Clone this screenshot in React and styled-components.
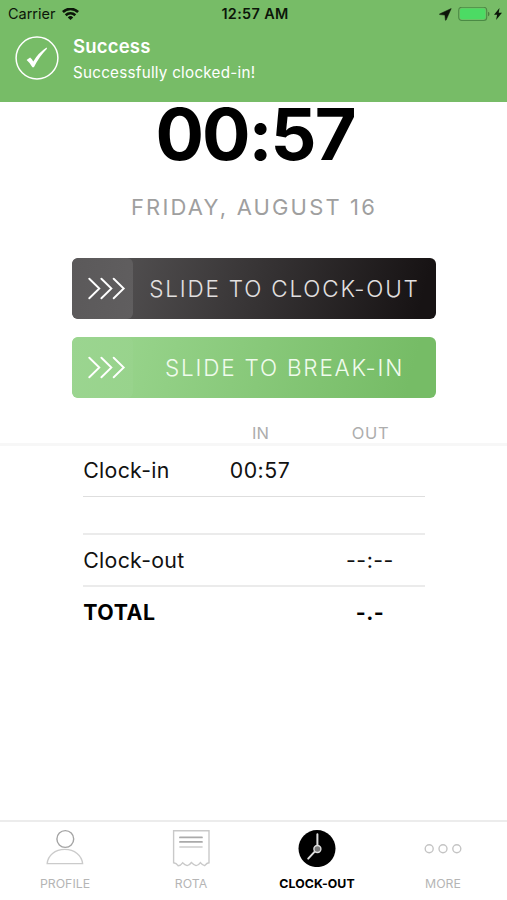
import React from "react";
import styled, { createGlobalStyle } from "styled-components";

const GlobalStyle = createGlobalStyle`
  *, *::before, *::after { box-sizing: border-box; }
  body {
    margin: 0;
    background: #fff;
    font-family: Inter, "Liberation Sans", sans-serif;
    font-feature-settings: "calt" 0;
  }
  svg { display: block; flex: none; }
`;

const Screen = styled.div`
  width: 507px;
  height: 900px;
  display: flex;
  flex-direction: column;
  background: #fff;
  color: #000;
  overflow: hidden;
`;

const Banner = styled.header`
  height: 102px;
  flex: none;
  background: #77bc67;
`;

const StatusBar = styled.div`
  height: 28px;
  padding: 0 5px 0 8px;
  display: grid;
  grid-template-columns: 1fr auto 1fr;
  align-items: center;
  color: #0c1609;
`;

const StatusGroup = styled.div`
  display: flex;
  align-items: center;
  justify-content: ${(p) => (p.$end ? "flex-end" : "flex-start")};
  gap: ${(p) => p.$gap}px;
`;

const Carrier = styled.span`
  font-size: 14.5px;
  line-height: 28px;
  letter-spacing: -0.02px;
`;

const StatusTime = styled.span`
  font-size: 14.4px;
  line-height: 28px;
  font-weight: 600;
  letter-spacing: 0.35px;
`;

const Notice = styled.div`
  display: flex;
  align-items: flex-start;
  padding: 8px 0 0 15px;
  gap: 14px;
  color: #fff;
`;

const NoticeText = styled.div`
  display: flex;
  flex-direction: column;
  margin-top: -1px;
`;

const NoticeTitle = styled.strong`
  font-size: 18.5px;
  line-height: 22px;
  font-weight: 600;
  letter-spacing: 0.2px;
`;

const NoticeBody = styled.span`
  margin-top: 5px;
  font-size: 15.2px;
  line-height: 22px;
  letter-spacing: 0.26px;
`;

const Main = styled.main`
  flex: 1;
  display: flex;
  flex-direction: column;
  align-items: center;
`;

const Clock = styled.div`
  height: 64px;
  line-height: 64px;
  font-size: 72px;
  font-weight: 700;
  letter-spacing: -2px;
  padding-left: 3px;
`;

const DateLine = styled.div`
  margin-top: 24px;
  height: 33px;
  line-height: 34px;
  font-size: 22px;
  font-weight: 400;
  letter-spacing: 2.15px;
  padding-left: 1px;
  color: #9f9f9f;
  white-space: nowrap;
`;

const Sliders = styled.div`
  width: 364px;
  margin: 35px 0 0 1px;
  display: flex;
  flex-direction: column;
  gap: 18.4px;
`;

const Slider = styled.div`
  height: 61px;
  display: flex;
  border-radius: 6px;
  overflow: hidden;
  color: ${(p) => p.$color};
  background: ${(p) => p.$fill};
`;

const SliderHandle = styled.div`
  width: 61px;
  border-radius: 6px;
  display: flex;
  align-items: center;
  padding-left: 15.5px;
  color: #fff;
  background: ${(p) => p.$fill};
`;

const SliderLabel = styled.span`
  flex: 1;
  text-align: center;
  font-size: 22.5px;
  line-height: 62px;
  font-weight: 300;
  letter-spacing: 1.8px;
  white-space: nowrap;
`;

const ColumnHeads = styled.div`
  width: 342px;
  margin-top: 23.6px;
  height: 21px;
  display: grid;
  grid-template-columns: 122px 110px 110px;
  font-size: 16.5px;
  line-height: 23px;
  color: #adadad;
  text-align: center;
`;

const Head = styled.span`
  grid-column: ${(p) => p.$column};
  letter-spacing: ${(p) => p.$spacing}px;
  padding-left: 2px;
`;

const Sheet = styled.section`
  width: 100%;
  border-top: 3px solid #f7f7f7;
  display: flex;
  flex-direction: column;
  align-items: center;
`;

const Row = styled.div`
  width: 342px;
  height: ${(p) => p.$height}px;
  display: grid;
  grid-template-columns: 122px 110px 110px;
  align-items: center;
  padding-bottom: ${(p) => p.$lift || 0}px;
  border-bottom: ${(p) => p.$line || 0}px solid ${(p) => (p.$line === 2 ? "#ebebeb" : "#dedede")};
  font-size: 21.3px;
  line-height: 26px;
  color: ${(p) => (p.$bold ? "#000" : "#111")};
  font-weight: ${(p) => (p.$bold ? 700 : 400)};
`;

const RowLabel = styled.span`
  padding-left: 0.7px;
  letter-spacing: ${(p) => p.$spacing || 0.32}px;
  white-space: nowrap;
`;

const Value = styled.span`
  grid-column: ${(p) => p.$column};
  text-align: center;
  letter-spacing: 0.5px;
  padding-left: 1px;
`;

const TabBar = styled.nav`
  height: 80px;
  flex: none;
  border-top: 2px solid #ececec;
  display: grid;
  grid-template-columns: repeat(4, 126px);
  padding-left: 2px;
`;

const Tab = styled.div`
  display: flex;
  flex-direction: column;
  align-items: center;
  padding-top: 7px;
`;

const TabLabel = styled.span`
  margin-top: 8px;
  font-size: 12.3px;
  line-height: 18px;
  font-weight: ${(p) => (p.$active ? 700 : 400)};
  letter-spacing: ${(p) => (p.$active ? 0.1 : 0)}px;
  color: ${(p) => (p.$active ? "#000" : "#b5b5b5")};
`;

const WifiIcon = () => (
  <svg width="17" height="13" viewBox="0 0 17 13" fill="none" stroke="currentColor" strokeWidth="2.6">
    <path d="M0.9 4a10.9 10.9 0 0 1 15.2 0" />
    <path d="M3.7 7.2a6.9 6.9 0 0 1 9.6 0" />
    <path d="M8.5 12.1 5.8 9.4a3.9 3.9 0 0 1 5.4 0Z" fill="currentColor" stroke="none" />
  </svg>
);

const LocationIcon = () => (
  <svg width="13" height="13" viewBox="0 0 13 13" fill="currentColor" stroke="currentColor" strokeWidth="0.5">
    <path d="M12.2 0.6 0.6 5.9q-0.3 0.5 0.3 0.7l5 0.5 0.5 5q0.3 0.5 0.7 0Z" />
  </svg>
);

const BatteryIcon = () => (
  <svg width="32" height="15" viewBox="0 0 32 15" fill="none">
    <rect x="0.7" y="0.3" width="28" height="13.2" rx="3" stroke="#4b8a45" strokeWidth="1.1" />
    <rect x="2" y="1.6" width="25.4" height="10.6" rx="1.8" fill="#4cdb64" />
    <path d="M30 4.7q1.5 0.6 1.5 2.2T30 9.2Z" fill="#4b7e41" />
  </svg>
);

const BoltIcon = () => (
  <svg width="8" height="13" viewBox="0 0 8 13" fill="currentColor">
    <path d="M5.5 0 0 6.8h3.1L2.1 12 8 4.8H4.7Z" />
  </svg>
);

const CheckIcon = () => (
  <svg width="44" height="44" viewBox="0 0 44 44">
    <circle cx="22" cy="22" r="20.9" fill="none" stroke="#fff" strokeWidth="1.5" />
    <path d="M11.6 23.9 15.1 21.5q1.9 1.8 3.2 3.9Q23.6 16.7 31.6 11.6L32 12.7Q24 20.7 18.9 31.2H17.4Q15.4 27.1 11.6 23.9Z" fill="#fff" />
  </svg>
);

const Chevrons = () => (
  <svg width="38" height="23" viewBox="0 0 38 23" fill="none" stroke="currentColor" strokeWidth="1.9" strokeLinecap="round">
    <path d="m1.3 1.7 10 9.8-10 9.8M13.4 1.7l10 9.8-10 9.8M25.7 1.7l10 9.8-10 9.8" />
  </svg>
);

const ProfileIcon = () => (
  <svg width="38" height="38" viewBox="0 0 38 38" fill="none">
    <circle cx="19.3" cy="10" r="8.4" stroke="#a4a4a4" strokeWidth="1.4" />
    <path d="M1.2 34.6C1.8 26.4 9 20.4 18.8 20.4S35.8 26.4 36.6 34.6Z" stroke="#cbcbcb" strokeWidth="1.4" />
  </svg>
);

const RotaIcon = () => (
  <svg width="38" height="38" viewBox="0 0 38 38" fill="none">
    <path d="M1.6 1.8H37V33.8Q34.9 34 32.7 36.6 30.2 36 28.4 33.6 26.4 36.5 24.1 36.6 21.9 36 19.4 33.5 17.4 36.4 15.2 36.6 12.9 36 10.6 33.8 8.5 36.7 6.1 36.7 4.4 34.2 1.6 33.8Z" stroke="#c9c9c9" strokeWidth="1.4" />
    <path d="M7.9 8.4H30M7.9 12.9H30" stroke="#aaa" strokeWidth="1.7" strokeLinecap="round" />
    <path d="M7.9 18H30" stroke="#cdcdcd" strokeWidth="1.6" strokeLinecap="round" />
  </svg>
);

const ClockIcon = () => (
  <svg width="38" height="38" viewBox="0 0 38 38" fill="none">
    <circle cx="19" cy="19.6" r="18.5" fill="#000" />
    <path d="M19.4 5.2V16M16.7 22.6 10.2 29.6" stroke="#ddd" strokeWidth="2" strokeLinecap="round" />
    <circle cx="19.4" cy="20" r="3.5" fill="#777" stroke="#ddd" strokeWidth="1.4" />
  </svg>
);

const MoreIcon = () => (
  <svg width="38" height="38" viewBox="0 0 38 38" fill="none" stroke="#c4c4c4" strokeWidth="1.4">
    <circle cx="5.2" cy="19.8" r="4" />
    <circle cx="19" cy="19.8" r="4" />
    <circle cx="32.8" cy="19.8" r="4" />
  </svg>
);

export default function App() {
  return (
    <>
      <GlobalStyle />
      <Screen>
        <Banner>
          <StatusBar>
            <StatusGroup $gap={7}>
              <Carrier>Carrier</Carrier>
              <WifiIcon />
            </StatusGroup>
            <StatusTime>12:57 AM</StatusTime>
            <StatusGroup $end $gap={6}>
              <LocationIcon />
              <StatusGroup $gap={4}>
                <BatteryIcon />
                <BoltIcon />
              </StatusGroup>
            </StatusGroup>
          </StatusBar>
          <Notice>
            <CheckIcon />
            <NoticeText>
              <NoticeTitle>Success</NoticeTitle>
              <NoticeBody>Successfully clocked-in!</NoticeBody>
            </NoticeText>
          </Notice>
        </Banner>
        <Main>
          <Clock>00:57</Clock>
          <DateLine>FRIDAY, AUGUST 16</DateLine>
          <Sliders>
            <Slider $color="#e2e0e0" $fill="linear-gradient(105deg, #575556 5%, #171314 95%)">
              <SliderHandle $fill="linear-gradient(100deg, #5b595a, #605e5f)">
                <Chevrons />
              </SliderHandle>
              <SliderLabel>SLIDE TO CLOCK-OUT</SliderLabel>
            </Slider>
            <Slider $color="#f0fbed" $fill="linear-gradient(105deg, #9bd68f 5%, #76bc66 92%)">
              <SliderHandle $fill="linear-gradient(100deg, #9bd590, #98d38c)">
                <Chevrons />
              </SliderHandle>
              <SliderLabel>SLIDE TO BREAK-IN</SliderLabel>
            </Slider>
          </Sliders>
          <ColumnHeads>
            <Head $column={2} $spacing={0}>IN</Head>
            <Head $column={3} $spacing={0.7}>OUT</Head>
          </ColumnHeads>
          <Sheet>
            <Row $height={51} $line={1} $lift={2}>
              <RowLabel>Clock-in</RowLabel>
              <Value $column={2}>00:57</Value>
            </Row>
            <Row $height={38} $line={2} />
            <Row $height={52} $line={2}>
              <RowLabel>Clock-out</RowLabel>
              <Value $column={3}>--:--</Value>
            </Row>
            <Row $height={51} $bold>
              <RowLabel $spacing={0.6}>TOTAL</RowLabel>
              <Value $column={3}>-.-</Value>
            </Row>
          </Sheet>
        </Main>
        <TabBar>
          <Tab>
            <ProfileIcon />
            <TabLabel>PROFILE</TabLabel>
          </Tab>
          <Tab>
            <RotaIcon />
            <TabLabel>ROTA</TabLabel>
          </Tab>
          <Tab>
            <ClockIcon />
            <TabLabel $active>CLOCK-OUT</TabLabel>
          </Tab>
          <Tab>
            <MoreIcon />
            <TabLabel>MORE</TabLabel>
          </Tab>
        </TabBar>
      </Screen>
    </>
  );
}
